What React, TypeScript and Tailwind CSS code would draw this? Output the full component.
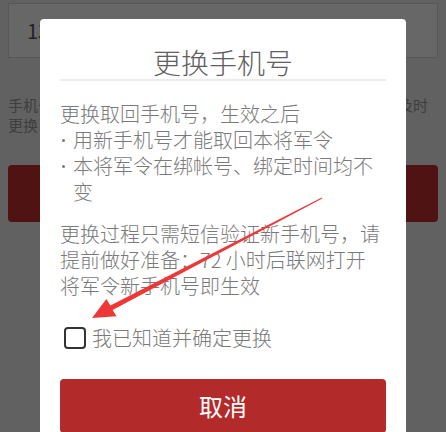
const font = { fontFamily: '"Noto Sans CJK SC", "Noto Sans", sans-serif' };

const Arrow = () => (
  <svg
    className="pointer-events-none absolute left-0 top-0"
    width="446"
    height="432"
    viewBox="0 0 446 432"
  >
    <polygon
      points="321.8,197.4 110.4,305.6 106.4,299 92,318 116.6,316.2 112.6,310 322.2,198.6"
      fill="#ee3838"
    />
  </svg>
);

const Bullet = ({ children }: { children: string }) => (
  <div className="flex">
    <span className="relative w-[13px] shrink-0">
      <span className="absolute left-[2px] top-[12px] h-[3px] w-[3px] rounded-full bg-[#7a7a7a]" />
    </span>
    <span>{children}</span>
  </div>
);

const ChangePhoneModal = () => {
  return (
    <div className="absolute left-[40px] top-[19px] w-[366px] h-[430px] rounded-[4px] bg-white px-[20px] pt-[26px] font-light">
      <div className="border-b-2 border-[#ebebeb] text-center text-[28px] leading-[34px] text-[#606060]">
        更换手机号
      </div>

      <div className="mt-[20px] text-[20px] leading-[26px] text-[#7a7a7a]">
        <p>更换取回手机号，生效之后</p>
        <Bullet>用新手机号才能取回本将军令</Bullet>
        <Bullet>本将军令在绑帐号、绑定时间均不变</Bullet>
      </div>

      <p className="mt-[16px] text-[20px] leading-[26px] text-[#7a7a7a]">
        更换过程只需短信验证新手机号，请
        <br />
        提前做好准备：72 小时后联网打开
        <br />
        将军令新手机号即生效
      </p>

      <label className="mt-[26px] flex h-[26px] items-center text-[20px] text-[#7a7a7a]">
        <span className="ml-[4px] mr-[6px] h-[22px] w-[22px] rounded-[4px] border-2 border-[#333]" />
        我已知道并确定更换
      </label>

      <button className="mt-[28px] flex h-[54px] w-full items-center justify-center rounded-[4px] bg-[#b32a2a] text-[24px] font-normal text-white">
        取消
      </button>
    </div>
  );
};

export default function App() {
  return (
    <div className="relative h-[432px] w-[446px] overflow-hidden bg-[#616161]" style={font}>
      <div className="px-[8px] pt-[3px]">
        <div className="flex h-[55px] items-center border border-[#575757] bg-[#676767] pl-[18px] text-[20px] text-[#222]">
          13
        </div>
        <div className="mt-[37px] text-[15px] leading-[20px] text-[#3e3e3e]">
          <p>手机号更换成功后，本将军令需在新手机号上重新绑定，请及时</p>
          <p>更换以免影响帐号安全。</p>
        </div>
        <div className="mt-[30px] h-[57px] rounded-[4px] bg-[#4f1313]" />
      </div>

      <ChangePhoneModal />
      <Arrow />
    </div>
  );
}
